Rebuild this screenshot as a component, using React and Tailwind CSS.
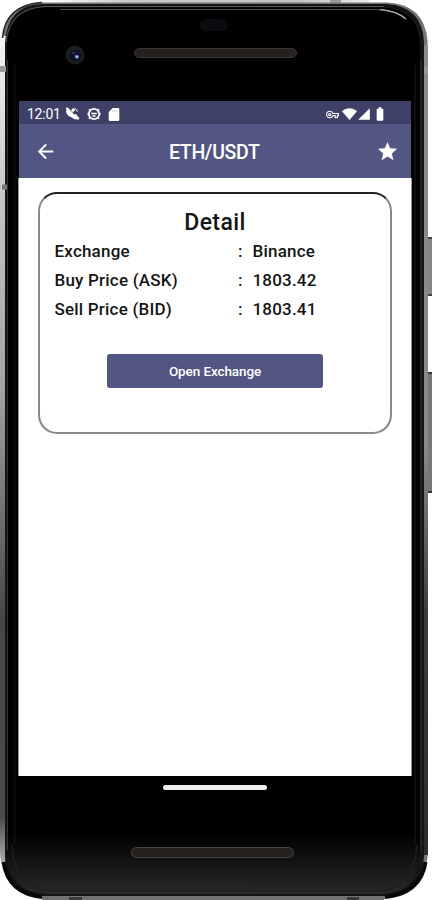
import React from 'react';
import { MdArrowBack, MdStar, MdOutlineVpnKey, MdBatteryFull, MdSignalCellular4Bar } from 'react-icons/md';

const rows = [
  { label: 'Exchange', value: 'Binance' },
  { label: 'Buy Price (ASK)', value: '1803.42' },
  { label: 'Sell Price (BID)', value: '1803.41' },
];

// Metal rim, glass and side buttons of the phone
const PhoneBody = () => (
  <svg className="absolute inset-0 -z-10" width="432" height="900" viewBox="0 0 432 900" aria-hidden="true">
    <defs>
      <linearGradient id="leftRim" x1="0" y1="0" x2="0" y2="1">
        <stop offset="0" stopColor="#f4f4f4" />
        <stop offset="0.2" stopColor="#c4c4c4" />
        <stop offset="0.42" stopColor="#a4a4a4" />
        <stop offset="0.7" stopColor="#474747" />
        <stop offset="0.94" stopColor="#4a4a4a" />
        <stop offset="1" stopColor="#b5b5b5" />
      </linearGradient>
      <linearGradient id="rightRim" x1="0" y1="0" x2="0" y2="1">
        <stop offset="0" stopColor="#8c8c8c" />
        <stop offset="0.5" stopColor="#888888" />
        <stop offset="0.7" stopColor="#3c3c3c" />
        <stop offset="1" stopColor="#2c2c2c" />
      </linearGradient>
      <linearGradient id="topRim" x1="0" y1="0" x2="1" y2="0">
        <stop offset="0" stopColor="#ffffff" />
        <stop offset="0.25" stopColor="#c9c9c9" />
        <stop offset="0.8" stopColor="#c4c4c4" />
        <stop offset="1" stopColor="#eeeeee" />
      </linearGradient>
      <linearGradient id="glass" x1="0" y1="0" x2="0" y2="1">
        <stop offset="0" stopColor="#000000" />
        <stop offset="0.93" stopColor="#000000" />
        <stop offset="0.97" stopColor="#171717" />
        <stop offset="1" stopColor="#292929" />
      </linearGradient>
    </defs>
    {/* power and volume keys */}
    <rect x="427" y="237" width="6" height="59" rx="1" fill="#858585" />
    <path d="M428 238h4M428 295h4" stroke="#444" strokeWidth="2" />
    <rect x="427" y="372" width="5" height="121" rx="1" fill="#777" />
    <path d="M428 373h4M428 492h4" stroke="#333" strokeWidth="2" />
    <path d="M45 0H370V3H45z" fill="url(#topRim)" />
    <path d="M330 0h11v4h-11z" fill="#9a9a9a" />
    {/* outer shell */}
    <path d="M42 2.5H387Q424 4 427.5 40V858Q422 899 382 899H44Q5 897 2.5 858V38Q5 5 42 2.5z" fill="#757575" />
    <path d="M0 36H7V866H4Q0 866 0 850z" fill="url(#leftRim)" />
    <path d="M424 45H428V855H424z" fill="url(#rightRim)" />
    <path d="M42 4H386Q423 6 424 43V857Q421 896 382 896H44Q5 894 5 857V43Q7 5 42 4z" fill="#151515" />
    <path d="M2.5 38Q5 5 42 2.5" fill="none" stroke="#262626" strokeWidth="1.5" />
    <path d="M44 7.5H383Q419 9 420 45V855Q418 893 382 894H46Q10 892 7 855V45Q10 9 44 7.5z" fill="url(#glass)" />
    <path d="M7.5 60V850M421 60V850" stroke="#303030" strokeWidth="1" />
    <path d="M14.5 65V845M415 65V845" stroke="#0e0e0e" strokeWidth="2" />
    <path d="M6 42Q9 9 44 6.5H384" fill="none" stroke="#555" strokeWidth="1" />
    <path d="M60 9.5H382" fill="none" stroke="#4c4c4c" strokeWidth="1" />
    <path d="M380 9.5Q397 11 406 19" fill="none" stroke="#aaa" strokeWidth="1.5" />
    <path d="M12 845Q14 889 50 891H378Q414 889 417 845" fill="none" stroke="#202020" strokeWidth="1.5" />
    <path d="M3.5 862Q8 893 42 897M425.5 862Q421 893 385 897" fill="none" stroke="#080808" strokeWidth="4" />
    <path d="M42 898.5H384" stroke="#707070" strokeWidth="3" />
    <path d="M69 898.5H82M347 898.5H359" stroke="#3a3a3a" strokeWidth="3" />
    {/* antenna bands */}
    <path d="M0 69H6M424 70H428" stroke="#999" strokeWidth="6" />
    <path d="M2 187H7" stroke="#777" strokeWidth="5" />
    <path d="M18.5 178V776M411.5 178V776" stroke="#999" strokeWidth="1" />
    {/* sensor and camera */}
    <path d="M200 25q0-6 8-6h12q8 0 8 6t-8 6h-12q-8 0-8-6z" fill="#0a0c10" />
    <circle cx="75" cy="55" r="9.5" fill="#1d1d20" />
    <circle cx="75.5" cy="55.5" r="5.5" fill="#101126" />
    <circle cx="73.5" cy="53" r="1.2" fill="#303a80" />
    <circle cx="76.8" cy="56.8" r="2" fill="#6678d0" />
    <circle cx="77" cy="57" r="1" fill="#c5ceff" />
  </svg>
);

const SatelliteIcon = () => (
  <svg width="15" height="14" viewBox="0 0 15 14" fill="#fff">
    <path d="M3 .6C.4 2.6.6 5.8 3 8.2c2.2 2.1 5 2.6 7.2 1.6z" />
    <path d="M5.6 3.6L8.2 1l1.9 2-2.5 2.7zM9 7.4l1.8-.6 3.6 4.4-1 1.1H9.4L5.4 9.6z" />
    <path d="M1.2.8l12.4 11.6" stroke="#fff" strokeWidth="1.6" />
    <path d="M5.4 2.6l5 5.4" stroke="#3f4067" strokeWidth=".5" />
    <path d="M9.4 1.2q2.4.8 3 3.4" fill="none" stroke="#fff" strokeWidth="1" />
  </svg>
);

const FaceIcon = () => (
  <svg width="14" height="14" viewBox="0 0 14 14" fill="none" stroke="#fff">
    <circle cx="7" cy="7" r="5.2" strokeWidth="1.8" />
    <path d="M2.6 3L1.8 2.2M11.4 3l.8-.8M.3 7H2M12 7h1.7M2.6 11l-.8.8M11.4 11l.8.8" strokeWidth="1.5" />
    <path d="M4.2 6.5h5.6M5.4 9h3.2" strokeWidth="1.5" />
  </svg>
);

const SdCardIcon = () => (
  <svg width="12" height="13" viewBox="0 0 12 13" fill="#fff">
    <path d="M4.7 0H10q1.3 0 1.3 1.3v10.4q0 1.3-1.3 1.3H2Q.7 13 .7 11.7V4z" />
    <path d="M4.5 2v2M6.5 2v2M8.5 2v2" stroke="#b8b8cd" strokeWidth=".7" />
  </svg>
);

const WifiIcon = () => (
  <svg width="15" height="12" viewBox="0 0 15 12" fill="#fff">
    <path d="M7.5 12L0 3.2C4.4-.8 10.6-.8 15 3.2z" />
  </svg>
);

const StatusBar = () => (
  <div className="flex h-[23px] items-center bg-[#3f4067] pt-[3px] pl-2 text-white">
    <span className="w-[37.5px] text-[14px] leading-none tracking-[-0.25px] whitespace-nowrap">12:01</span>
    <div className="flex items-center gap-[7px]">
      <SatelliteIcon />
      <FaceIcon />
      <SdCardIcon />
    </div>
    <div className="mr-[23px] ml-auto flex items-center">
      <MdOutlineVpnKey size={13} className="mr-[3px]" />
      <WifiIcon />
      <MdSignalCellular4Bar size={14} />
      <MdBatteryFull size={16} className="ml-px" />
    </div>
  </div>
);

const AppBar = () => (
  <header className="flex h-[54px] items-center bg-[#525683] pr-3 pl-[15px] text-white">
    <MdArrowBack size={23} />
    <h1 className="ml-[112px] pt-[3px] text-[19.5px] font-medium tracking-[-0.35px]">ETH/USDT</h1>
    <MdStar size={23} className="ml-auto" />
  </header>
);

const DetailCard = () => (
  <section className="mx-[19px] mt-[14px] h-[242px] rounded-[19px] border-2 border-[#8a8a8a] border-t-[#222] px-[14px] pt-[14px] text-[#151515]">
    <h2 className="text-center text-[23px] leading-[30px] font-medium tracking-[0.4px]">Detail</h2>
    <dl className="-mt-px">
      {rows.map((row) => (
        <div key={row.label} className="flex h-[29.3px] items-center pl-[0.5px] text-[17px] font-medium tracking-[0.2px]">
          <dt className="w-[183.5px]">{row.label}</dt>
          <dd className="flex">
            <span className="w-[14.5px]">:</span>
            {row.value}
          </dd>
        </div>
      ))}
    </dl>
    <button className="mx-auto mt-[29px] block h-[34px] w-[216px] rounded-[3px] bg-[#525683] text-[13.5px] font-medium tracking-[-0.1px] text-white">
      Open Exchange
    </button>
  </section>
);

export default function App() {
  return (
    <div className="relative isolate flex h-[900px] w-[432px] flex-col overflow-hidden bg-white font-['Roboto',sans-serif]">
      <PhoneBody />
      <div className="mt-[48px] ml-[134px] h-[10px] w-[163px] rounded-full border border-[#393634] bg-[#26211f]" />
      <main className="mt-[43px] ml-[19px] h-[674.5px] w-[392px] bg-white">
        <StatusBar />
        <AppBar />
        <DetailCard />
      </main>
      <div className="mt-[9px] ml-[163px] h-[5px] w-[104px] rounded-full bg-[#eeeeee]" />
      <div className="mt-[57px] ml-[131px] h-[11px] w-[163px] rounded-full border border-[#484440] bg-[#24211e]" />
    </div>
  );
}
